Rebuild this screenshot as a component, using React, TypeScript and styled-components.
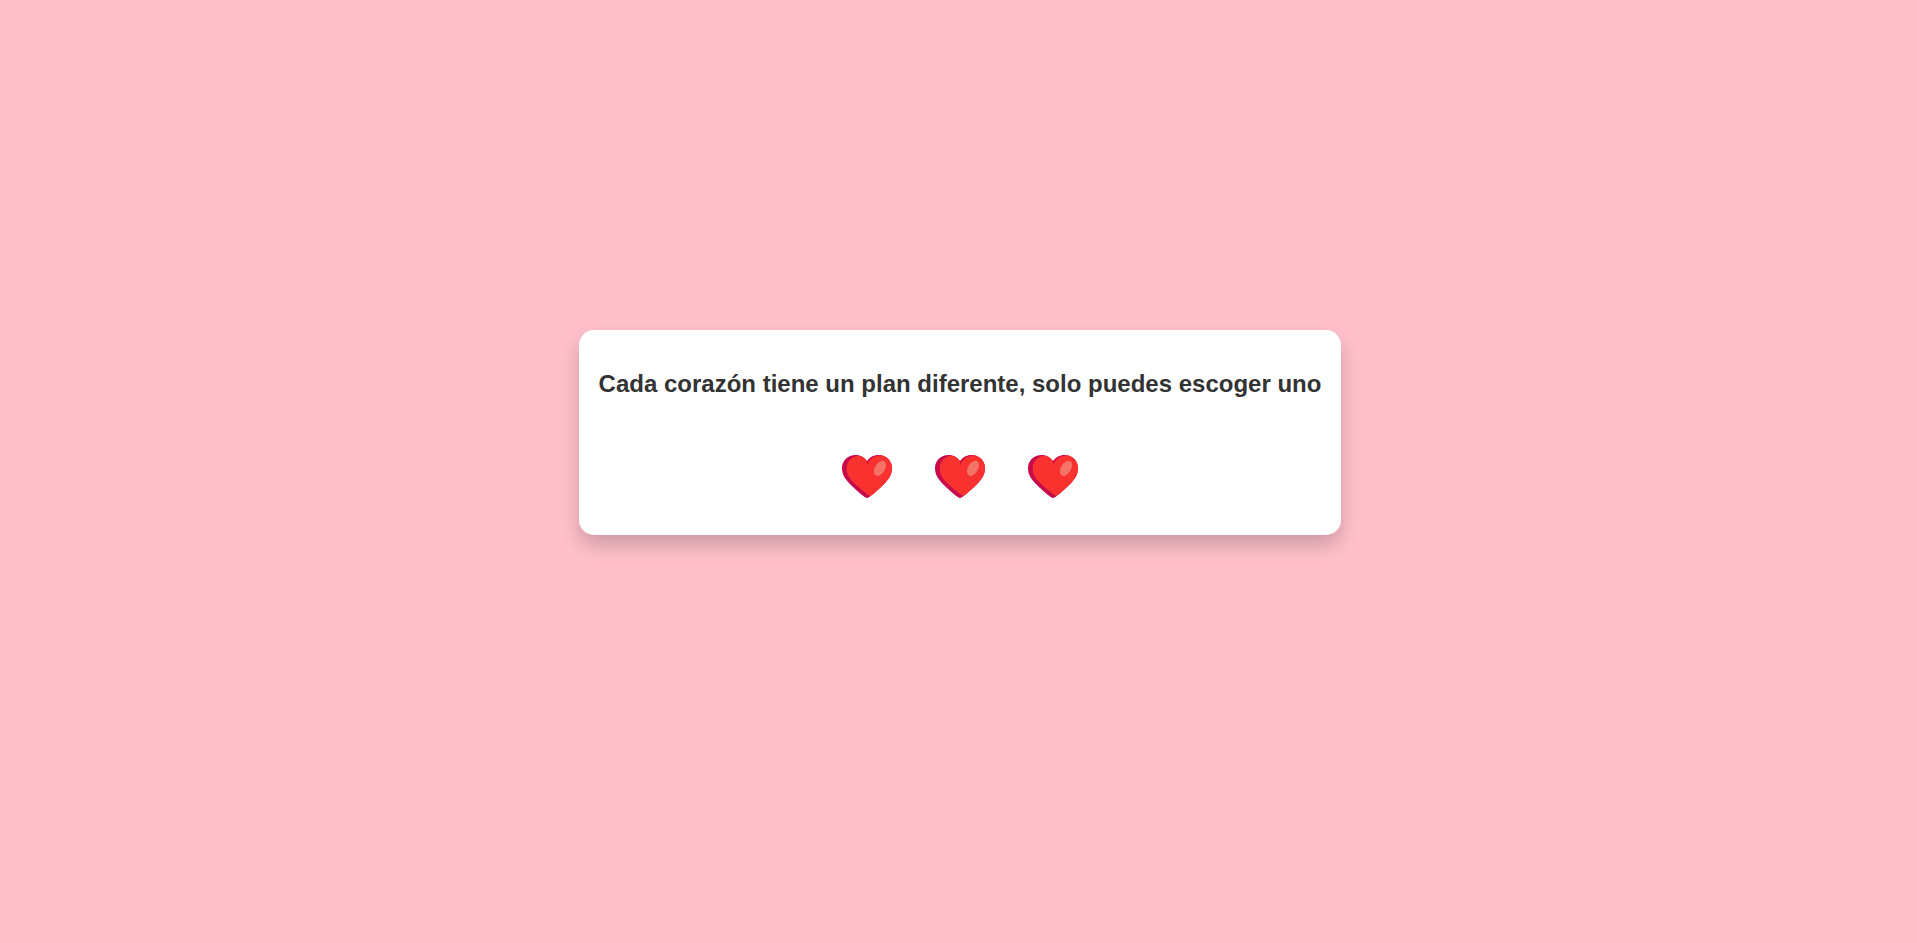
import React from "react";
import styled, { createGlobalStyle } from "styled-components";

const GlobalStyle = createGlobalStyle`
  body {
    margin: 0;
    background: #ffc0cb;
    font-family: Arial, "Liberation Sans", sans-serif;
  }
`;

const Page = styled.main`
  display: flex;
  flex-direction: column;
  align-items: center;
  justify-content: center;
  box-sizing: border-box;
  min-height: 100vh;
  padding: 0 0 78px 3px;
`;

const Card = styled.section`
  padding: 20px;
  border-radius: 15px;
  background: #ffffff;
  box-shadow: 0 10px 20px rgba(0, 0, 0, 0.2);
  text-align: center;
`;

const Title = styled.h1`
  margin: 20px 0;
  color: #333333;
  font-size: 24px;
  line-height: 28px;
  font-weight: bold;
`;

const Hearts = styled.div`
  display: flex;
  justify-content: center;
  gap: 20px;
  margin-top: 40px;
`;

const HeartButton = styled.button`
  display: flex;
  align-items: center;
  justify-content: center;
  width: 73px;
  height: 77px;
  padding: 0;
  border: 0;
  background: none;
  cursor: pointer;
`;

const HeartIcon = () => (
  <svg width="50" height="43" viewBox="0 0 150 129" aria-hidden="true">
    <path
      fill="#c60c4b"
      d="M75 18C67 7 55 0 41 0C17 0 0 17 0 40C0 57 8 70 20 83C34 98 52 114 69 127Q75 131 81 127C98 114 116 98 130 83C142 70 150 57 150 40C150 17 133 0 109 0C95 0 83 7 75 18Z"
    />
    <path
      fill="#f9312f"
      d="M75 18C69 11 63 5 54 2C31 1 14 18 14 41C14 57 22 69 34 82C49 97 68 112 84 124C100 112 117 97 130 83C142 70 150 57 150 40C150 20 137 5 119 1C97 2 79 14 75 33Z"
    />
    <ellipse
      cx="114"
      cy="40"
      rx="15"
      ry="25"
      fill="#f37366"
      transform="rotate(30 114 40)"
    />
  </svg>
);

const plans = [1, 2, 3];

export default function App() {
  return (
    <>
      <GlobalStyle />
      <Page>
        <Card>
          <Title>Cada corazón tiene un plan diferente, solo puedes escoger uno</Title>
          <Hearts>
            {plans.map((plan) => (
              <HeartButton key={plan} type="button" aria-label={`Plan ${plan}`}>
                <HeartIcon />
              </HeartButton>
            ))}
          </Hearts>
        </Card>
      </Page>
    </>
  );
}
